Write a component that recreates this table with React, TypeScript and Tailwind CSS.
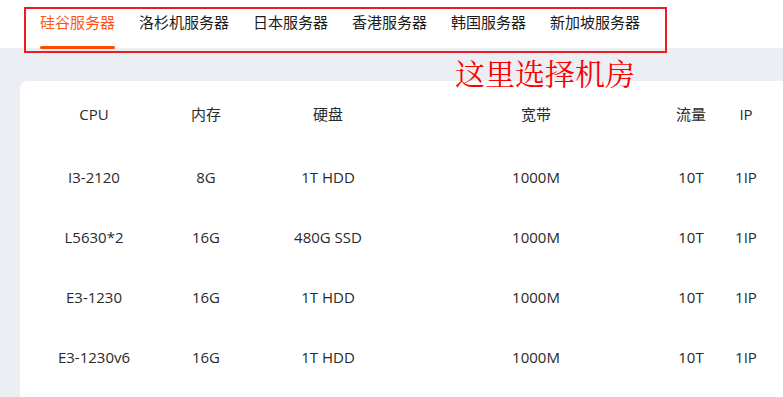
const tabs = ['硅谷服务器', '洛杉机服务器', '日本服务器', '香港服务器', '韩国服务器', '新加坡服务器'];

const headers = ['CPU', '内存', '硬盘', '宽带', '流量', 'IP'];

const rows = [
	['I3-2120', '8G', '1T HDD', '1000M', '10T', '1IP'],
	['L5630*2', '16G', '480G SSD', '1000M', '10T', '1IP'],
	['E3-1230', '16G', '1T HDD', '1000M', '10T', '1IP'],
	['E3-1230v6', '16G', '1T HDD', '1000M', '10T', '1IP'],
];

// each column: width + left margin, so the centres line up with the layout
const cols = [
	'w-[112px]',
	'w-[112px]',
	'w-[132px]',
	'ml-[42px] w-[200px]',
	'ml-[25px] w-[60px]',
	'w-[50px]',
];

function Row({ cells, header }: { cells: string[]; header?: boolean }) {
	return (
		<div className={`flex items-center pl-[18px] ${header ? 'h-[66px]' : 'h-[60px]'}`}>
			{cells.map((c, i) => (
				<div key={i} className={`${cols[i]} shrink-0 text-center whitespace-nowrap`}>
					{c}
				</div>
			))}
		</div>
	);
}

export default function App() {
	return (
		<div
			className="relative flex h-[397px] w-[783px] flex-col overflow-hidden bg-[#ebeef3] text-[15px] text-[#222]"
			style={{ fontFamily: '"Open Sans", "Noto Sans CJK SC", sans-serif' }}
		>
			<header className="flex h-[48px] shrink-0 gap-x-[24px] bg-white pl-[40px]">
				{tabs.map((t, i) => (
					<div
						key={t}
						className={`relative flex h-full items-start pt-[11px] leading-[22px] ${
							i === 0 ? 'text-[#ff5418]' : 'text-[#1a1a1a]'
						}`}
					>
						{t}
						{i === 0 && <span className="absolute bottom-[-1px] left-0 h-[3px] w-full rounded-sm bg-[#ff4a00]" />}
					</div>
				))}
			</header>

			<main className="ml-[20px] mt-[33px] flex-1 rounded-tl-lg bg-white text-[#2a2a2a]">
				<Row cells={headers} header />
				{rows.map((r, i) => (
					<Row key={i} cells={r} />
				))}
			</main>

			{/* annotation overlay */}
			<div className="pointer-events-none absolute left-[24px] top-[7px] h-[46px] w-[643px] border-2 border-[#ec1c24]" />
			<div
				className="pointer-events-none absolute left-[455px] top-[55px] text-[30px] leading-[34px] text-[#ff0000]"
				style={{ fontFamily: '"Noto Serif CJK SC", "Liberation Serif", "Noto Sans CJK SC", serif' }}
			>
				这里选择机房
			</div>
		</div>
	);
}
